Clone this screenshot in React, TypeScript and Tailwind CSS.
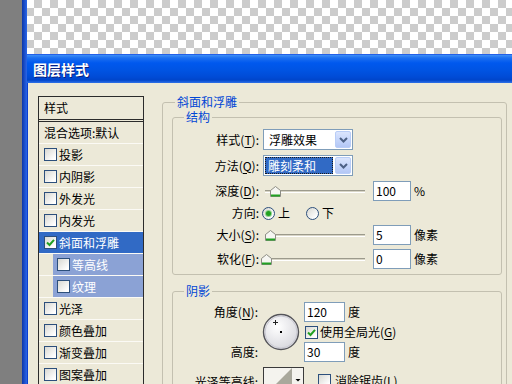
import React from "react";

type Effect = { name: string; checked?: boolean; selected?: boolean; sub?: boolean };

const effects: Effect[] = [
  { name: "投影" },
  { name: "内阴影" },
  { name: "外发光" },
  { name: "内发光" },
  { name: "斜面和浮雕", checked: true, selected: true },
  { name: "等高线", sub: true },
  { name: "纹理", sub: true },
  { name: "光泽" },
  { name: "颜色叠加" },
  { name: "渐变叠加" },
  { name: "图案叠加" },
];

function CheckBox({ checked = false }: { checked?: boolean }) {
  return (
    <span className="flex h-[13px] w-[13px] shrink-0 items-center justify-center border border-[#2c4f7c] bg-[linear-gradient(135deg,#d8d8d2,#fff_85%)]">
      {checked && (
        <svg width="9" height="9" viewBox="0 0 9 9">
          <path d="M1 4.5 L3.5 7 L8 1.8" fill="none" stroke="#21a121" strokeWidth="2" />
        </svg>
      )}
    </span>
  );
}

function Radio({ checked = false }: { checked?: boolean }) {
  return (
    <span className="flex h-[13px] w-[13px] shrink-0 items-center justify-center rounded-full border border-[#2c4f7c] bg-[linear-gradient(135deg,#d8d8d2,#fff_85%)]">
      {checked && <span className="h-[5px] w-[5px] rounded-full bg-[#21a121] shadow-[0_0_0_1px_#8fd28f]" />}
    </span>
  );
}

function Select({ value, focused = false }: { value: string; focused?: boolean }) {
  return (
    <div className="ml-[4px] flex h-[21px] w-[90px] border border-[#7f9db9] bg-white p-[1px]">
      {focused ? (
        <div className="mr-[2px] flex flex-1 items-center border border-dotted border-[#1a1a1a] bg-[#316ac5] pl-[2px] text-white">
          {value}
        </div>
      ) : (
        <div className="flex flex-1 items-center pl-[4px]">{value}</div>
      )}
      <div className="flex w-[16px] items-center justify-center rounded-[2px] border border-[#b9cdf7] bg-[linear-gradient(#dbe5fd,#c2d3fa_60%,#b3c7f5)]">
        <svg width="9" height="6" viewBox="0 0 9 6">
          <path d="M1 1 L4.5 4.5 L8 1" fill="none" stroke="#4d6185" strokeWidth="2" />
        </svg>
      </div>
    </div>
  );
}

function Field({ value, w = "w-[38px]" }: { value: string; w?: string }) {
  return (
    <div className={`flex h-[20px] ${w} items-center border border-[#7f9db9] bg-white pl-[2px]`}>{value}</div>
  );
}

function Slider({ frac }: { frac: number }) {
  return (
    <div className="relative ml-[4px] flex h-[20px] w-[104px] items-center">
      <div className="mx-[2px] h-[3px] flex-1 border-t border-[#9c9a8c] border-b border-b-white bg-[#d8d5c6]" />
      <svg
        className="absolute top-[5px]"
        style={{ left: Math.round(3 + frac * 94 - 5) }}
        width="11"
        height="11"
        viewBox="0 0 11 11"
      >
        <path d="M5.5 0.5 L10.5 4.5 V10.5 H0.5 V4.5 Z" fill="#f6f6f2" stroke="#8c8c84" />
        <path d="M1 9.5 H10" stroke="#21a121" strokeWidth="2" />
      </svg>
    </div>
  );
}

function AngleDial() {
  return (
    <svg width="38" height="38" viewBox="0 0 38 38">
      <defs>
        <radialGradient id="dial" cx="40%" cy="35%" r="70%">
          <stop offset="0" stopColor="#ffffff" />
          <stop offset="1" stopColor="#d6d6dc" />
        </radialGradient>
      </defs>
      <circle cx="19" cy="19" r="17.5" fill="url(#dial)" stroke="#55555a" strokeWidth="1.4" />
      <circle cx="19" cy="19" r="16" fill="none" stroke="#c9c9d2" strokeWidth="1" />
      <path d="M13.5 7 V12 M11 9.5 H16" stroke="#222" strokeWidth="1" />
      <rect x="18" y="18" width="2" height="2" fill="#000" />
    </svg>
  );
}

function ContourBox() {
  return (
    <svg width="41" height="30" viewBox="0 0 41 30">
      <rect x="0.5" y="0.5" width="40" height="29" fill="#f4f3ee" stroke="#3a3a3a" />
      <polygon points="1,29 29,1 29,29" fill="#a9a89c" />
      <path d="M32.5 12 H37.5 L35 14.5 Z" fill="#000" />
    </svg>
  );
}

function StyleList() {
  return (
    <div className="ml-[10px] mt-[13px] w-[106px] shrink-0 self-start border border-[#2b2b2b] bg-[#ece9d8]">
      <div className="flex h-[25px] items-center border-b-[3px] border-double border-[#2b2b2b] pl-[5px]">样式</div>
      <div className="flex h-[22px] items-center border-b border-[#fbfaf5] pl-[5px]">混合选项:默认</div>
      {effects.map((e) =>
        e.sub ? (
          <div key={e.name} className="flex h-[22px] border-b border-[#fbfaf5]">
            <div className="ml-[14px] flex flex-1 items-center gap-[2px] bg-[#8ba2d5] pl-[4px] text-white">
              <CheckBox checked={e.checked} />
              {e.name}
            </div>
          </div>
        ) : (
          <div
            key={e.name}
            className={`flex h-[22px] items-center gap-[2px] border-b border-[#fbfaf5] pl-[5px] ${
              e.selected ? "bg-[#316ac5] text-white" : ""
            }`}
          >
            <CheckBox checked={e.checked} />
            {e.name}
          </div>
        )
      )}
    </div>
  );
}

export default function App() {
  return (
    <div className="flex h-[384px] w-[512px] overflow-hidden font-['Noto_Sans_CJK_SC',sans-serif] text-[12px] leading-[14px] text-black">
      <div className="w-[22px] shrink-0 bg-[#7f7f7f]" />
      <div className="w-[5px] shrink-0 bg-[linear-gradient(90deg,#0b36a8,#2a66e8)]" />
      <div className="flex min-w-0 flex-1 flex-col">
        <div className="h-[54px] shrink-0 bg-[conic-gradient(#cccccc_0_25%,#ffffff_0_50%,#cccccc_0_75%,#ffffff_0)] bg-[length:16px_16px] bg-[position:-1px_0]" />
        <div className="flex h-[29px] shrink-0 items-center bg-[linear-gradient(#0831d9_0,#3d8ff7_1px,#1c6ff0_4px,#0058ee_9px,#0054e3_16px,#004bd6_23px,#0045ca_26px,#2f72e8_29px)] pl-[6px] text-[14px] font-bold leading-none text-white [text-shadow:1px_1px_#0a1f80]">
          图层样式
        </div>
        <div className="flex flex-1 border-l border-[#0a3fd0] bg-[#ece9d8]">
          <StyleList />
          <fieldset className="ml-[18px] mt-[12px] w-[345px] min-w-0 shrink-0 self-start rounded-[3px] border border-[#c3c0b0] pb-[10px] pl-[9px] pr-[4px] pt-[1px]">
            <legend className="ml-[3px] px-[2px] text-[#0046d5]">斜面和浮雕</legend>

            <fieldset className="min-w-0 rounded-[3px] border border-[#c3c0b0] pb-[5px]">
              <legend className="ml-[11px] px-[2px] text-[#0046d5]">结构</legend>
              <div className="mt-[5px] flex h-[21px] items-center">
                <span className="w-[86px] text-right">
                  样式(<span className="underline underline-offset-2">T</span>):
                </span>
                <Select value="浮雕效果" />
              </div>
              <div className="mt-[5px] flex h-[21px] items-center">
                <span className="w-[86px] text-right">
                  方法(<span className="underline underline-offset-2">Q</span>):
                </span>
                <Select value="雕刻柔和" focused />
              </div>
              <div className="mt-[5px] flex h-[20px] items-center">
                <span className="w-[86px] text-right">
                  深度(<span className="underline underline-offset-2">D</span>):
                </span>
                <Slider frac={0.1} />
                <div className="ml-[6px]">
                  <Field value="100" />
                </div>
                <span className="ml-[3px]">%</span>
              </div>
              <div className="mt-[3px] flex h-[18px] items-center">
                <span className="w-[86px] text-right">方向:</span>
                <span className="ml-[3px]">
                  <Radio checked />
                </span>
                <span className="ml-[3px]">上</span>
                <span className="ml-[16px]">
                  <Radio />
                </span>
                <span className="ml-[3px]">下</span>
              </div>
              <div className="mt-[3px] flex h-[20px] items-center">
                <span className="w-[86px] text-right">
                  大小(<span className="underline underline-offset-2">S</span>):
                </span>
                <Slider frac={0.045} />
                <div className="ml-[6px]">
                  <Field value="5" />
                </div>
                <span className="ml-[3px]">像素</span>
              </div>
              <div className="mt-[4px] flex h-[20px] items-center">
                <span className="w-[86px] text-right">
                  软化(<span className="underline underline-offset-2">F</span>):
                </span>
                <Slider frac={0} />
                <div className="ml-[6px]">
                  <Field value="0" />
                </div>
                <span className="ml-[3px]">像素</span>
              </div>
            </fieldset>

            <fieldset className="mt-[9px] min-w-0 rounded-[3px] border border-[#c3c0b0] pb-[8px]">
              <legend className="ml-[11px] px-[2px] text-[#0046d5]">阴影</legend>
              <div className="mt-[4px] grid grid-cols-[85px_38px_auto] grid-rows-[20px_20px_20px] gap-x-[4px]">
                <span className="flex items-center justify-end">
                  角度(<span className="underline underline-offset-2">N</span>):
                </span>
                <div className="row-span-3 flex items-center">
                  <AngleDial />
                </div>
                <div className="flex items-center">
                  <Field value="120" w="w-[41px]" />
                  <span className="ml-[3px]">度</span>
                </div>
                <div className="col-start-3 flex items-center">
                  <span className="ml-[1px]">
                    <CheckBox checked />
                  </span>
                  <span className="ml-[2px]">
                    使用全局光(<span className="underline underline-offset-2">G</span>)
                  </span>
                </div>
                <span className="col-start-1 row-start-3 flex items-center justify-end">高度:</span>
                <div className="col-start-3 row-start-3 flex items-center">
                  <Field value="30" w="w-[41px]" />
                  <span className="ml-[3px]">度</span>
                </div>
              </div>
              <div className="mt-[5px] flex items-start">
                <span className="mt-[8px] w-[85px] text-right">光泽等高线:</span>
                <span className="ml-[5px]">
                  <ContourBox />
                </span>
                <span className="ml-[14px] mt-[7px]">
                  <CheckBox />
                </span>
                <span className="ml-[4px] mt-[7px]">
                  消除锯齿(<span className="underline underline-offset-2">L</span>)
                </span>
              </div>
            </fieldset>
          </fieldset>
        </div>
      </div>
    </div>
  );
}
